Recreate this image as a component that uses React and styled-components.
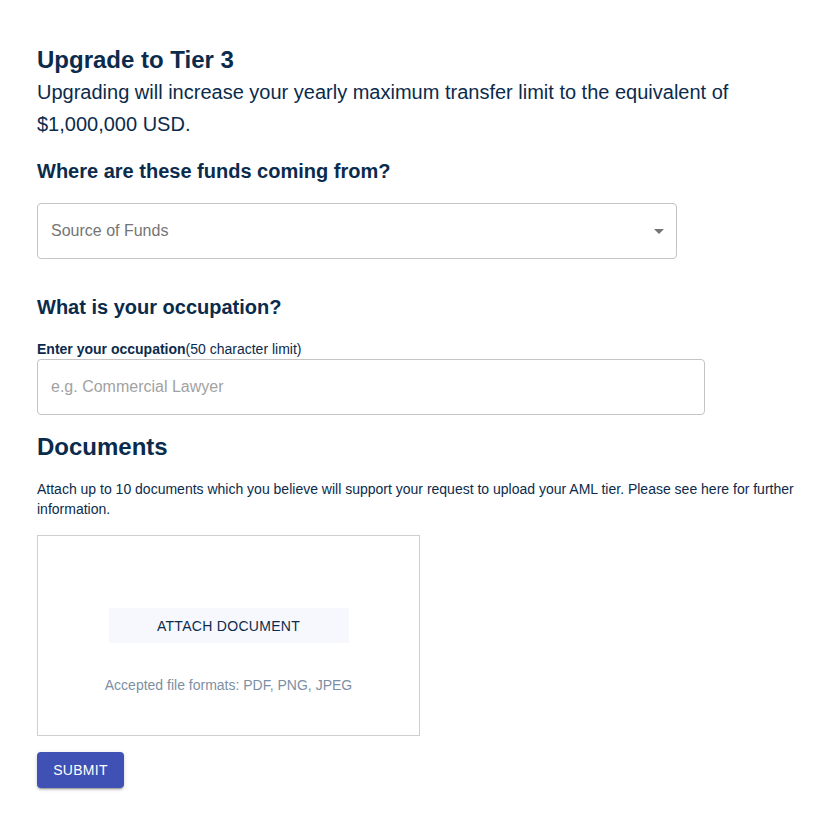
import React from "react"
import styled, { createGlobalStyle } from "styled-components"

const Global = createGlobalStyle`
  body {
    margin: 0;
    background: #fff;
    font-family: "Liberation Sans", Arial, sans-serif;
  }
`

const Page = styled.div`
  padding: 44px 20px 40px 37px;
  color: #0b2b4c;
`

const Title = styled.h1`
  margin: 0;
  font-size: 24px;
  line-height: 32px;
  font-weight: 700;
  color: #0b2b4c;
`

const Lead = styled.p`
  margin: 0;
  font-size: 20px;
  line-height: 32px;
  color: #0b2b4c;
  max-width: 760px;
`

const Question = styled.h2`
  margin: ${p => p.top}px 0 0;
  font-size: 20px;
  line-height: 28px;
  font-weight: 700;
  color: #0b2b4c;
`

const Field = styled.div`
  box-sizing: border-box;
  width: ${p => p.w}px;
  height: 56px;
  margin-top: ${p => p.top}px;
  border: 1px solid #c4c4c4;
  border-radius: 4px;
  display: flex;
  align-items: center;
  padding: 0 12px 0 13px;
  font-size: 16px;
  color: ${p => p.muted ? "#a2a2a2" : "#757575"};
`

const Grow = styled.span`
  flex: 1;
`

const Caret = styled.span`
  width: 0;
  height: 0;
  border-left: 5px solid transparent;
  border-right: 5px solid transparent;
  border-top: 5px solid #757575;
`

const Label = styled.div`
  margin-top: 20px;
  font-size: 14px;
  line-height: 16px;
  color: #0b2b4c;
  b { font-weight: 700; }
`

const Heading = styled.h2`
  margin: 18px 0 0;
  font-size: 24px;
  line-height: 28px;
  font-weight: 700;
  color: #0b2b4c;
`

const Note = styled.p`
  margin: 18px 0 0;
  font-size: 14px;
  line-height: 20px;
  color: #0b2b4c;
`

const Drop = styled.div`
  box-sizing: border-box;
  width: 383px;
  height: 201px;
  margin-top: 16px;
  border: 1px solid #cfcfcf;
  display: flex;
  flex-direction: column;
  align-items: center;
  padding-top: 72px;
`

const Attach = styled.button`
  width: 240px;
  height: 35px;
  border: none;
  background: #f6f8fe;
  font-family: inherit;
  font-size: 14px;
  letter-spacing: 0.3px;
  color: #0b2b4c;
  text-transform: uppercase;
`

const Formats = styled.div`
  margin-top: 34px;
  font-size: 14px;
  color: #7d8fa3;
`

const Submit = styled.button`
  margin-top: 16px;
  width: 87px;
  height: 36px;
  border: none;
  border-radius: 4px;
  background: #3f51b5;
  color: #fff;
  font-family: inherit;
  font-size: 14px;
  letter-spacing: 0.3px;
  box-shadow: 0 3px 1px -2px rgba(0,0,0,0.2), 0 2px 2px rgba(0,0,0,0.14), 0 1px 5px rgba(0,0,0,0.12);
`

export default function App() {
  return (
    <Page>
      <Global />
      <Title>Upgrade to Tier 3</Title>
      <Lead>Upgrading will increase your yearly maximum transfer limit to the equivalent of $1,000,000 USD.</Lead>
      <Question top={17}>Where are these funds coming from?</Question>
      <Field w={640} top={18}>
        <Grow>Source of Funds</Grow>
        <Caret />
      </Field>
      <Question top={34}>What is your occupation?</Question>
      <Label><b>Enter your occupation</b>(50 character limit)</Label>
      <Field w={668} top={2} muted>e.g. Commercial Lawyer</Field>
      <Heading>Documents</Heading>
      <Note>Attach up to 10 documents which you believe will support your request to upload your AML tier. Please see here for further information.</Note>
      <Drop>
        <Attach>Attach Document</Attach>
        <Formats>Accepted file formats: PDF, PNG, JPEG</Formats>
      </Drop>
      <Submit>SUBMIT</Submit>
    </Page>
  )
}
